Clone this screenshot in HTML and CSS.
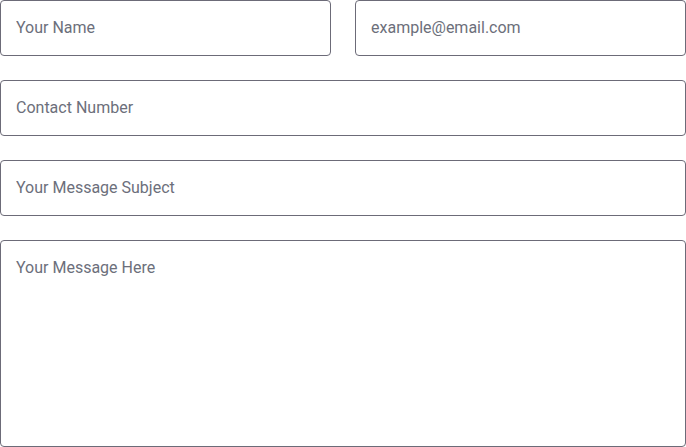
FILE: index.html
```html
<!DOCTYPE html>
<html>
<head>
<meta charset="utf-8">
<link rel="stylesheet" href="styles.css">
</head>
<body>
<form class="form">
  <div class="row two">
    <input class="field" type="text" placeholder="Your Name">
    <input class="field" type="email" placeholder="example@email.com">
  </div>
  <input class="field" type="text" placeholder="Contact Number">
  <input class="field" type="text" placeholder="Your Message Subject">
  <textarea class="field area" placeholder="Your Message Here"></textarea>
</form>
</body>
</html>
```
FILE: styles.css
```css
html, body {
  margin: 0;
  padding: 0;
  background: #ffffff;
}
.form {
  display: flex;
  flex-direction: column;
  gap: 24px;
  width: 686px;
}
.row.two {
  display: grid;
  grid-template-columns: 1fr 1fr;
  gap: 24px;
}
.field {
  box-sizing: border-box;
  width: 100%;
  height: 56px;
  margin: 0;
  padding: 0 15px 2px;
  border: 1px solid #6c6b78;
  border-radius: 4px;
  font-family: Roboto, "Liberation Sans", sans-serif;
  font-size: 16px;
  color: #333;
  background: #fff;
  outline: none;
}
.field::placeholder {
  color: #6c6f7b;
  opacity: 1;
}
.area {
  height: 207px;
  padding: 17px 15px;
  line-height: 20px;
  resize: none;
  display: block;
}
```
